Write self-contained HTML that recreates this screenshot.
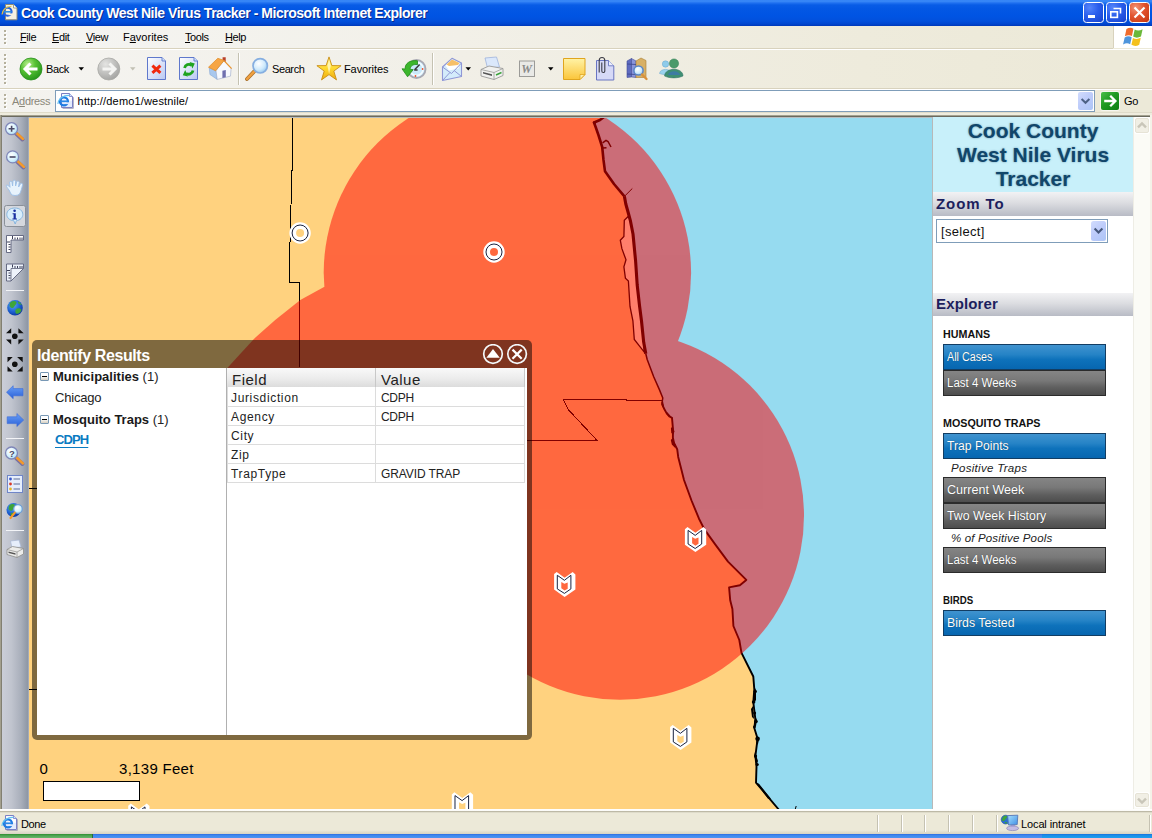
<!DOCTYPE html>
<html lang="en">
<head>
<meta charset="utf-8">
<title>Cook County West Nile Virus Tracker - Microsoft Internet Explorer</title>
<style>
html,body{margin:0;padding:0;}
body{width:1152px;height:838px;overflow:hidden;background:#ece9d8;font-family:"Liberation Sans",sans-serif;}
#win{position:relative;width:1152px;height:838px;overflow:hidden;background:#ece9d8;}
.abs{position:absolute;}
/* ---------- title bar ---------- */
#titlebar{left:0;top:0;width:1152px;height:26px;
 background:linear-gradient(to bottom,#2f7ff5 0px,#3d8cf8 1px,#1f70f0 3px,#085ce6 5px,#0357e4 9px,#0054e3 16px,#0250dc 21px,#0146cf 24px,#0038b8 26px);}
#titletext{left:21px;top:5px;color:#fff;font-weight:bold;font-size:14px;line-height:16px;white-space:nowrap;letter-spacing:-0.48px;
 text-shadow:1px 1px 0 #0a2a8c;}
.wbtn{top:2px;width:19px;height:19px;border:1px solid #fff;border-radius:3.5px;
 background:radial-gradient(circle at 30% 25%,#5585fa 0%,#2a5eec 45%,#1742cc 100%);}
#wclose{background:radial-gradient(circle at 30% 25%,#f29478 0%,#e2532e 45%,#c4360f 100%);}
/* ---------- menu bar ---------- */
#menubar{left:0;top:26px;width:1152px;height:22px;background:linear-gradient(to right,#f5f5f3 0%,#f2f0e8 40%,#eeebdc 75%,#ece9d8 95%);}
.menu{top:31px;font-size:11px;line-height:13px;color:#000;white-space:nowrap;letter-spacing:-0.4px;}
.menu u{text-decoration:underline;}
.grip{width:3px;}
.grip i{display:block;width:2px;height:2px;background:#b5b09c;margin-bottom:2px;box-shadow:1px 1px 0 #fff;}
/* ---------- toolbar ---------- */
#toolbar{left:0;top:50px;width:1152px;height:39px;background:linear-gradient(to right,#f5f4f1 0%,#f1efe7 40%,#eeebdc 75%,#ece9d8 95%);}
.tbtxt{font-size:11px;line-height:13px;color:#000;white-space:nowrap;letter-spacing:-0.4px;}
.sep{width:1px;background:#c5c2b2;box-shadow:1px 0 0 #fff;}
/* ---------- address bar ---------- */
#addrbar{left:0;top:90px;width:1152px;height:23px;background:linear-gradient(to right,#f4f3ef 0%,#f0eee5 40%,#eeebdc 75%,#ece9d8 95%);}
#addrbox{left:55px;top:90px;width:1038px;height:20px;border:1px solid #7f9db9;background:#fff;}
/* ---------- status bar ---------- */
#statusbar{left:0;top:811px;width:1152px;height:23px;background:#ece9d8;}
</style>
</head>
<body>
<div id="win">
<!-- TITLE BAR -->
<div id="titlebar" class="abs"></div>
<div id="titletext" class="abs">Cook County West Nile Virus Tracker - Microsoft Internet Explorer</div>
<div id="wmin" class="abs wbtn" style="left:1083px"></div>
<div id="wmax" class="abs wbtn" style="left:1106px"></div>
<div id="wclose" class="abs wbtn" style="left:1129px"></div>

<!-- MENU BAR -->
<div id="menubar" class="abs"></div>
<div class="abs menu" style="left:20px"><u>F</u>ile</div>
<div class="abs menu" style="left:52px"><u>E</u>dit</div>
<div class="abs menu" style="left:86px"><u>V</u>iew</div>
<div class="abs menu" style="left:123px;letter-spacing:0">F<u>a</u>vorites</div>
<div class="abs menu" style="left:185px"><u>T</u>ools</div>
<div class="abs menu" style="left:225px"><u>H</u>elp</div>

<!-- TOOLBAR -->
<div id="toolbar" class="abs"></div>

<!-- ADDRESS BAR -->
<div id="addrbar" class="abs"></div>
<div id="addrbox" class="abs"></div>

<!-- toolbar grips -->
<div class="abs grip" style="left:4px;top:30px"><i></i><i></i><i></i><i></i></div>
<div class="abs grip" style="left:4px;top:54px"><i></i><i></i><i></i><i></i><i></i><i></i><i></i><i></i></div>
<div class="abs grip" style="left:4px;top:94px"><i></i><i></i><i></i><i></i></div>
<!-- separators between bars -->
<div class="abs" style="left:0;top:48px;width:1113px;height:1px;background:#d8d2bd"></div>
<div class="abs" style="left:0;top:49px;width:1152px;height:1px;background:#fff"></div>
<div class="abs" style="left:0;top:88px;width:1152px;height:1px;background:#d8d2bd"></div>
<div class="abs" style="left:0;top:89px;width:1152px;height:1px;background:#fff"></div>
<!-- windows flag box -->
<div class="abs" style="left:1113px;top:26px;width:39px;height:22px;background:#fff;border-left:1px solid #d8d2bd;box-sizing:border-box"></div>
<svg class="abs" style="left:1120px;top:26px" width="28" height="23.3" viewBox="0 0 24 20">
 <path d="M5.5,2.5 C8,1.2 9.8,1.2 11.5,2.4 L10.2,8.6 C8.4,7.5 6.4,7.6 4.2,8.8 Z" fill="#ef6b2c"/>
 <path d="M12.6,3 C14.6,4.2 16.8,4.2 19.4,2.8 L18,9 C15.6,10.3 13.4,10.3 11.3,9.1 Z" fill="#6bb83a"/>
 <path d="M4,9.8 C6.2,8.6 8.2,8.6 10,9.7 L8.7,15.6 C6.8,14.5 4.8,14.6 2.6,15.8 Z" fill="#4e95dc"/>
 <path d="M11.1,10.2 C13.2,11.4 15.4,11.4 17.8,10.1 L16.5,16 C14.2,17.4 12,17.4 9.8,16.1 Z" fill="#f4c11d"/>
</svg>
<!-- TOOLBAR ICONS -->
<svg class="abs" style="left:0;top:50px" width="700" height="38" viewBox="0 50 700 38">
 <defs>
  <radialGradient id="gGreen" cx="35%" cy="28%" r="75%"><stop offset="0" stop-color="#b8ee8e"/><stop offset="0.45" stop-color="#58c234"/><stop offset="1" stop-color="#27971c"/></radialGradient>
  <radialGradient id="gGray" cx="35%" cy="28%" r="75%"><stop offset="0" stop-color="#e4e4e2"/><stop offset="0.5" stop-color="#c4c4c2"/><stop offset="1" stop-color="#a5a5a3"/></radialGradient>
  <linearGradient id="gPage" x1="0" y1="0" x2="1" y2="1"><stop offset="0" stop-color="#ffffff"/><stop offset="1" stop-color="#b9c8f2"/></linearGradient>
  <radialGradient id="gLens" cx="40%" cy="35%" r="70%"><stop offset="0" stop-color="#ffffff"/><stop offset="0.6" stop-color="#cfeafc"/><stop offset="1" stop-color="#8fc4ee"/></radialGradient>
  <linearGradient id="gStar" x1="0" y1="0" x2="0" y2="1"><stop offset="0" stop-color="#fff38a"/><stop offset="0.5" stop-color="#ffd92e"/><stop offset="1" stop-color="#eeaa10"/></linearGradient>
  <linearGradient id="gNote" x1="0" y1="0" x2="0" y2="1"><stop offset="0" stop-color="#fff3a6"/><stop offset="1" stop-color="#fbc53a"/></linearGradient>
 </defs>
 <!-- back -->
 <circle cx="31" cy="69" r="11" fill="url(#gGreen)" stroke="#2a8f1e" stroke-width="0.8"/>
 <path d="M25,69 L37.5,69 M30.5,63.5 L25,69 L30.5,74.5" fill="none" stroke="#fff" stroke-width="3" stroke-linejoin="miter"/>
 <path d="M78.5,67.3 L84.0,67.3 L81.25,70.6 Z" fill="#000"/>
 <!-- forward -->
 <circle cx="108.8" cy="69" r="11" fill="url(#gGray)" stroke="#a9a9a6" stroke-width="0.8"/>
 <path d="M102.5,69 L115,69 M109.5,63.5 L115,69 L109.5,74.5" fill="none" stroke="#f4f4f2" stroke-width="3"/>
 <path d="M130.0,67.3 L135.5,67.3 L132.75,70.6 Z" fill="#c2c0b4"/>
 <!-- stop -->
 <path d="M147.5,57.5 L162,57.5 L165.5,61 L165.5,79.5 L147.5,79.5 Z" fill="url(#gPage)" stroke="#5f78cc" stroke-width="1"/>
 <path d="M162,57.5 L162,61 L165.5,61" fill="#cfe0fb" stroke="#5f78cc" stroke-width="0.9"/>
 <path d="M152.4,65.6 L160.4,72.8 M160.4,65.6 L152.4,72.8" stroke="#f0280e" stroke-width="3" fill="none"/>
 <!-- refresh -->
 <path d="M179.5,57.5 L194,57.5 L197.5,61 L197.5,79.5 L179.5,79.5 Z" fill="url(#gPage)" stroke="#5f78cc" stroke-width="1"/>
 <path d="M194,57.5 L194,61 L197.5,61" fill="#cfe0fb" stroke="#5f78cc" stroke-width="0.9"/>
 <path d="M184.6,68 A4.3,4.3 0 0 1 191.6,65.4 M193,70.6 A4.3,4.3 0 0 1 186,73.2" fill="none" stroke="#1fa31f" stroke-width="2.8"/>
 <path d="M189.6,62 L194.8,63.4 L192.4,68.6 Z M188,76.6 L182.8,75.2 L185.2,70 Z" fill="#1fa31f"/>
 <!-- home -->
 <path d="M222.6,57.3 L225.7,57.3 L225.7,62 L222.6,61 Z" fill="#b8402a"/>
 <path d="M209.3,68 L216,70.7 L217.2,79.4 L209.9,74.5 Z" fill="#a9c8ee" stroke="#7fa0d0" stroke-width="0.5"/>
 <path d="M223.8,60.7 L231.1,68.2 L230.5,76.1 L217.2,79.4 L216,70.7 Z" fill="#f7f9fd" stroke="#9aa8c8" stroke-width="0.6"/>
 <path d="M222.4,70.8 L225.8,70 L225.8,77.3 L222.4,78.1 Z" fill="#6f6fae"/>
 <path d="M208.5,67.2 L217.8,58.3 L224.2,60.4 L215.6,70.8 Z" fill="#f6a544" stroke="#e08a24" stroke-width="0.7" stroke-linejoin="round"/>
 <path d="M224,60.6 L231.6,68.6" stroke="#e9942e" stroke-width="1.3" fill="none"/>
 <!-- separator -->
 <path d="M238.5,53 L238.5,85" stroke="#c5c2b2" stroke-width="1"/><path d="M239.5,53 L239.5,85" stroke="#fff" stroke-width="1"/>
 <!-- search -->
 <path d="M254,71.6 L247,79" stroke="#a8702c" stroke-width="3.8" stroke-linecap="round"/>
 <path d="M254,71.6 L247,79" stroke="#f0a040" stroke-width="2.4" stroke-linecap="round"/>
 <circle cx="260.2" cy="65.8" r="7.2" fill="url(#gLens)" stroke="#86aee0" stroke-width="1.7"/>
 <!-- favorites star -->
 <path d="M329.0,56.9 L331.9,65.6 L341.1,65.7 L333.8,71.1 L336.5,79.9 L329.0,74.6 L321.5,79.9 L324.2,71.1 L316.9,65.7 L326.1,65.6 Z" fill="url(#gStar)" stroke="#c98d14" stroke-width="0.9" stroke-linejoin="round"/>
 <path d="M329.1,60 L330.8,65.6 L329.1,74 L327.4,65.6 Z" fill="#fffbd0" opacity="0.75"/>
 <!-- history -->
 <circle cx="416.5" cy="69" r="9" fill="#c9e9fa" stroke="#a9a9b3" stroke-width="1.9"/>
 <circle cx="416.5" cy="69" r="6.6" fill="none" stroke="#f4fbff" stroke-width="1.6"/>
 <path d="M414.6,69.8 L419.6,64.6 M414.2,70 L417.6,70" stroke="#3c3c3c" stroke-width="1.5" fill="none"/>
 <circle cx="422.6" cy="69" r="0.9" fill="#f0502a"/><circle cx="415.5" cy="76" r="0.9" fill="#f0502a"/>
 <path d="M417.5,60.8 C410,59.6 404.6,63.6 405.2,69 L402,68.8 L407.6,76.8 L413.2,69.6 L410.2,69.4 C410.2,66 412.8,64 417.5,64.6 Z" fill="#3cb62c" stroke="#1f8a18" stroke-width="0.8" stroke-linejoin="round"/>
 <!-- separator -->
 <path d="M432.5,53 L432.5,85" stroke="#c5c2b2" stroke-width="1"/><path d="M433.5,53 L433.5,85" stroke="#fff" stroke-width="1"/>
 <!-- mail -->
 <path d="M442.5,67 L452,58.3 L461.5,63 L461.5,76.5 L442.5,80.5 Z" fill="#d4ecfb" stroke="#8f97d6" stroke-width="1.1" stroke-linejoin="round"/>
 <path d="M445.5,65.5 L452,59.6 L459.5,63 L458.5,68.5 L449,70.5 Z" fill="#fff"/>
 <path d="M446.5,64.5 L452,59.6 L459.5,63 L458,65 L449,66 Z" fill="#f6c06a"/>
 <path d="M442.5,67 L451.5,73.5 L461.5,63 M442.5,80.5 L450,72.4 M461.5,76.5 L454.2,70.6" fill="none" stroke="#8f97d6" stroke-width="1"/>
 <path d="M465.5,67.3 L471.0,67.3 L468.25,70.6 Z" fill="#000"/>
 <!-- print -->
 <path d="M485,58 L496.5,57 L499.5,67 L487.5,68 Z" fill="#dbe8fb" stroke="#9fb4dc" stroke-width="0.8"/>
 <path d="M481,69.5 L489,66 L503,68.5 L503,75.5 L494,79.5 L481,76 Z" fill="#f1f1ef" stroke="#9a9a98" stroke-width="0.9"/>
 <path d="M481,69.5 L494,72.5 L503,68.5 M494,72.5 L494,79.5" fill="none" stroke="#9a9a98" stroke-width="0.8"/>
 <path d="M483,72 L492,74.3 L492,76 L483,73.6 Z" fill="#555"/>
 <path d="M496,75 L501.5,72.5" stroke="#39a33a" stroke-width="1.4"/>
 <!-- word -->
 <rect x="519.5" y="61" width="15" height="15.5" fill="#e9e9e6" stroke="#9b9b98" stroke-width="1"/>
 <text x="521.3" y="73.3" font-family="Liberation Serif, serif" font-size="12" font-weight="bold" font-style="italic" fill="#8a8a88">W</text>
 <path d="M548.0,67.3 L553.5,67.3 L550.75,70.6 Z" fill="#000"/>
 <!-- note -->
 <path d="M563.5,58.5 L585,58.5 L585,74.5 L580,79.5 L563.5,79.5 Z" fill="url(#gNote)" stroke="#e0a51e" stroke-width="1"/>
 <path d="M585,74.5 L580,74.5 L580,79.5 Z" fill="#fff0a8" stroke="#e0a51e" stroke-width="0.8"/>
 <!-- clip page -->
 <path d="M596.5,60.5 L608.5,60.5 L613.8,65.8 L613.8,80 L596.5,80 Z" fill="#d6d9f7" stroke="#6a76c2" stroke-width="1"/>
 <path d="M608.5,60.5 L608.5,65.8 L613.8,65.8" fill="#eceffc" stroke="#6a76c2" stroke-width="0.9"/>
 <path d="M599.2,72.5 L599.2,60.5 A2.8,3 0 0 1 604.8,60.5 L604.8,71 A1.5,1.5 0 0 1 601.8,71 L601.8,62.5" fill="none" stroke="#3c3c46" stroke-width="1.1"/>
 <!-- research -->
 <path d="M627,61 L631.5,58.5 L631.5,77 L627,77.5 Z" fill="#5f6cc0" stroke="#434e98" stroke-width="0.6"/>
 <path d="M631.5,58.5 L636,61 L636,77.5 L631.5,77 Z" fill="#8a95dc" stroke="#434e98" stroke-width="0.6"/>
 <path d="M636,61 L641,58 L646,60.5 L646,77.5 L636,77.5 Z" fill="#d8b065" stroke="#a87e32" stroke-width="0.6"/>
 <path d="M627,74 L636,74.5 M627,64 L636,64.5" stroke="#39438a" stroke-width="0.8"/>
 <circle cx="638.5" cy="70.5" r="4.6" fill="url(#gLens)" stroke="#5a86c8" stroke-width="1.5"/>
 <path d="M642,74.5 L646.5,79" stroke="#d9913c" stroke-width="2.4" stroke-linecap="round"/>
 <!-- messenger -->
 <circle cx="665.5" cy="64" r="3.2" fill="#8ecbea" stroke="#6aa6cf" stroke-width="0.5"/>
 <path d="M659.5,73.5 C660,68 671,68 671.5,73.5 C668,75 663,75 659.5,73.5 Z" fill="#9ad3ee" stroke="#6aa6cf" stroke-width="0.5"/>
 <circle cx="674" cy="63.5" r="4.6" fill="#4a9a6a" stroke="#2f7a52" stroke-width="0.5"/>
 <path d="M664.5,76 C665,67 683,67 683,76 C678,78.5 669.5,78.5 664.5,76 Z" fill="#3f8f73" stroke="#2a6f5f" stroke-width="0.5"/>
 <path d="M668,75 C669,70 679,70 680,75 Z" fill="#3d74b8" opacity="0.7"/>
</svg>
<div class="abs tbtxt" style="left:46px;top:63px">Back</div>
<div class="abs tbtxt" style="left:272px;top:63px">Search</div>
<div class="abs tbtxt" style="left:344px;top:63px;letter-spacing:-0.1px">Favorites</div>
<!-- address bar contents -->
<div class="abs tbtxt" style="left:12px;top:95px;color:#8a877a;letter-spacing:-0.3px">A<u>d</u>dress</div>
<svg class="abs" style="left:57px;top:92px" width="18" height="18" viewBox="0 0 18 18">
 <path d="M5.6,16.4 L16.4,16.4 L16.4,5.2" fill="none" stroke="#8d8aa6" stroke-width="1" opacity="0.7"/>
 <path d="M4.5,1.5 L12.5,1.5 L15.5,4.5 L15.5,15.5 L4.5,15.5 Z" fill="#e4ecfd" stroke="#7a80c4" stroke-width="1"/>
 <path d="M5.2,2.2 L12,2.2 L12,5 L14.8,5 L14.8,9 L5.2,7 Z" fill="#fdfdff"/>
 <path d="M12.5,1.5 L12.5,4.5 L15.5,4.5" fill="#cfe0fb" stroke="#7a80c4" stroke-width="0.8"/>
 <circle cx="6.9" cy="9.3" r="4" fill="none" stroke="#1f7be2" stroke-width="2.3"/>
 <path d="M3.2,9.3 L10.8,9.3" stroke="#2a8ae8" stroke-width="1.7"/>
 <path d="M7.8,10.3 L12.2,10.3 L12.2,12.1 L7.8,12.1 Z" fill="#dde8fc"/>
 <path d="M0.9,12 C1.4,6.5 6.5,3.2 12.2,3.4" fill="none" stroke="#62c2f2" stroke-width="1.1"/>
</svg>
<div class="abs tbtxt" style="left:77.6px;top:95px;letter-spacing:0.17px">http://demo1/westnile/</div>
<div class="abs" style="left:1078px;top:92px;width:15px;height:18px;border-radius:2px;background:linear-gradient(135deg,#d2dcfd 0%,#bccbfa 50%,#adc5f6 100%)"></div>
<svg class="abs" style="left:1078px;top:92px" width="15" height="18" viewBox="0 0 15 18"><path d="M3.6,7 L7.5,10.8 L11.4,7" fill="none" stroke="#4d6185" stroke-width="2"/></svg>
<div class="abs" style="left:1101px;top:92px;width:18px;height:18px;border-radius:2px;background:linear-gradient(135deg,#4cc04a 0%,#1f9a22 45%,#0e7d14 100%);box-shadow:0 0 0 1px #f6f6ef"></div>
<svg class="abs" style="left:1101px;top:92px" width="18" height="18" viewBox="0 0 18 18"><path d="M3.2,9 L14,9 M9.2,3.8 L14.4,9 L9.2,14.2" fill="none" stroke="#fff" stroke-width="2.3"/></svg>
<div class="abs tbtxt" style="left:1124px;top:95px">Go</div>
<!-- title bar icon -->
<svg class="abs" style="left:1px;top:3px" width="20" height="20" viewBox="0 0 20 20">
 <path d="M4.5,1.5 L12.5,1.5 L16,5 L16,16.8 L4.5,16.8 Z" fill="#f4f1e2" stroke="#8d8a78" stroke-width="1"/>
 <path d="M12.5,1.5 L12.5,5 L16,5" fill="#fff" stroke="#8d8a78" stroke-width="0.8"/>
 <circle cx="6.6" cy="8.8" r="4" fill="none" stroke="#2462e0" stroke-width="2.1"/>
 <path d="M2.8,8.8 L10.6,8.8" stroke="#2a8fe6" stroke-width="1.6"/>
 <path d="M7.4,10.4 L12,10.4 L12,12.2 L7.4,12.2 Z" fill="#f4f1e2"/>
 <path d="M1,11.5 C1.5,7 5,3.5 10.5,3.2" fill="none" stroke="#e8c43a" stroke-width="1.1"/>
</svg>
<!-- window button glyphs -->
<svg class="abs" style="left:1083px;top:2px" width="67" height="21" viewBox="0 0 67 21">
 <rect x="5" y="13" width="7" height="3" fill="#fff"/>
 <path d="M30.5,6.5 L37.5,6.5 L37.5,11.5" fill="none" stroke="#fff" stroke-width="1.6"/>
 <rect x="27.8" y="9.8" width="6.6" height="5.6" fill="none" stroke="#fff" stroke-width="1.6"/>
 <path d="M51.5,5.5 L61.5,15.5 M61.5,5.5 L51.5,15.5" fill="none" stroke="#fff" stroke-width="2.2"/>
</svg>
<!-- CONTENT -->
<!-- content frame -->
<div class="abs" style="left:0;top:112px;width:1152px;height:1px;background:#dfdbc9"></div>
<div class="abs" style="left:0;top:113px;width:1152px;height:2px;background:#efecde"></div>
<div class="abs" style="left:0;top:115px;width:1152px;height:1px;background:#a3a190"></div>
<div class="abs" style="left:0;top:116px;width:1152px;height:1px;background:#6b6a5e"></div>
<div class="abs" style="left:0;top:115px;width:2px;height:694px;background:linear-gradient(to right,#b4b09c,#716f64)"></div>
<div class="abs" style="left:1150px;top:115px;width:2px;height:694px;background:#f4f2e8"></div>
<div class="abs" style="left:0;top:809px;width:1152px;height:2px;background:linear-gradient(to bottom,#fff,#fbfaf6)"></div>
<!-- LEFT MAP TOOLBAR -->
<div id="ltool" class="abs" style="left:2px;top:117px;width:27px;height:692px;background:linear-gradient(to right,#cbced8 0%,#c0c4ce 35%,#a9afbb 70%,#8d96a4 96%,#b9bec8 100%);"></div>
<svg class="abs" style="left:2px;top:117px" width="27" height="460" viewBox="2 117 27 460">
 <defs>
  <radialGradient id="lLens" cx="40%" cy="35%" r="70%"><stop offset="0" stop-color="#ffffff"/><stop offset="0.6" stop-color="#d6f1fc"/><stop offset="1" stop-color="#a6d8f2"/></radialGradient>
  <radialGradient id="lGlobe" cx="38%" cy="32%" r="75%"><stop offset="0" stop-color="#5aa8f0"/><stop offset="0.6" stop-color="#1c5fd0"/><stop offset="1" stop-color="#0a2f9a"/></radialGradient>
  <linearGradient id="lArr" x1="0" y1="0" x2="0" y2="1"><stop offset="0" stop-color="#6aa0f6"/><stop offset="1" stop-color="#2a60d8"/></linearGradient>
 </defs>
 <!-- zoom in -->
 <path d="M16,133.5 L22.5,139.5" stroke="#7a6fa0" stroke-width="4" stroke-linecap="round"/>
 <path d="M16.5,133 L23,139" stroke="#f39a2c" stroke-width="2.4" stroke-linecap="round"/>
 <circle cx="11.6" cy="128.7" r="6" fill="url(#lLens)" stroke="#7f86b8" stroke-width="1.3"/>
 <path d="M8.6,128.8 L14.6,128.8 M11.6,125.8 L11.6,131.8" stroke="#4a4a66" stroke-width="1.6"/>
 <!-- zoom out -->
 <path d="M17,161.5 L23.5,167.5" stroke="#7a6fa0" stroke-width="4" stroke-linecap="round"/>
 <path d="M17.5,161 L24,167" stroke="#f39a2c" stroke-width="2.4" stroke-linecap="round"/>
 <circle cx="12.6" cy="156.9" r="6" fill="url(#lLens)" stroke="#7f86b8" stroke-width="1.3"/>
 <path d="M9.6,157 L15.6,157" stroke="#4a4a66" stroke-width="1.6"/>
 <!-- hand -->
 <path d="M9,190 C7.5,188 6.2,186.5 6.3,185.3 C7.3,184.6 8.8,185.8 10,187.3 L9.6,182 C10.3,180.8 11.6,181 12,182.2 L12.6,186 L13,180.8 C13.8,179.8 15.2,180 15.5,181.2 L15.6,186 L16.8,181.6 C17.8,180.8 19,181.2 19.2,182.4 L18.6,187 L20.6,183.6 C21.6,183 22.6,183.6 22.6,184.8 C21.8,188 21,191.5 19.6,194 C17.5,196 12.5,196 11,194 Z" fill="#e8f3fc" stroke="#9cc0e8" stroke-width="0.9"/>
 <!-- info (selected) -->
 <rect x="4.5" y="205.5" width="21" height="21" rx="2" fill="#d5d8de" stroke="#8a9099" stroke-width="1"/>
 <path d="M14.8,208 C19.6,208 22.8,210.8 22.8,214.4 C22.8,217.6 20.2,220.2 16.4,220.7 L15.2,224 L13.8,220.7 C9.6,220.4 6.8,217.8 6.8,214.4 C6.8,210.8 10,208 14.8,208 Z" fill="#d8eefc" stroke="#7fb0dc" stroke-width="0.9"/>
 <circle cx="14.6" cy="210.8" r="1.3" fill="#1a2fa0"/>
 <path d="M12.6,213.2 L15.8,213.2 L15.8,218.4 L17,218.4 L17,219.4 L12.4,219.4 L12.4,218.4 L13.6,218.4 L13.6,214.2 L12.6,214.2 Z" fill="#1a2fa0"/>
 <!-- measure 1 -->
 <path d="M6.5,235.5 L23.5,235.5 L23.5,240 L11,240 L11,252.5 L6.5,252.5 Z" fill="#fff" stroke="#5a5f78" stroke-width="0.9"/>
 <path d="M12.5,236 L12.5,239 M15,237.5 L15,239.5 M17.5,237.5 L17.5,239.5 M20,237.5 L20,239.5 M22,237.5 L22,239.5 M7,242 L10,242 M8.5,244.5 L10.5,244.5 M8.5,247 L10.5,247 M8.5,249.5 L10.5,249.5" stroke="#3a3f58" stroke-width="1"/>
 <!-- measure 2 -->
 <path d="M6.5,264 L23.5,264 L23.5,268.5 L11,281 L6.5,281 Z" fill="#eef3fb" stroke="#5a5f78" stroke-width="0.9"/>
 <path d="M11,268.5 L23.5,268.5 M11,268.5 L11,281" stroke="#5a5f78" stroke-width="0.8"/>
 <path d="M12.5,264.5 L12.5,267.5 M15,266 L15,268 M17.5,266 L17.5,268 M20,266 L20,268 M22,266 L22,268 M7,270.5 L10,270.5 M8.5,273 L10.5,273 M8.5,275.5 L10.5,275.5 M8.5,278 L10.5,278" stroke="#3a3f58" stroke-width="1"/>
 <!-- separator -->
 <path d="M6,290.5 L24,290.5" stroke="#f3f4f7" stroke-width="1"/>
 <!-- globe -->
 <circle cx="15" cy="307.8" r="7.8" fill="url(#lGlobe)"/>
 <path d="M10,303 C12,300.5 15,300.5 16.5,302 C17,304 15,305 14,307 C13,309 11,308 9.5,306 Z M16,309 C18,307.5 20.5,308 21.5,310 C20.5,313 18,314.5 16,313.5 C15,312 15,310.5 16,309 Z M18,301.5 C19.5,302 21,303.5 21.8,305 C20.5,305 19,304 18,303 Z" fill="#3fa53a"/>
 <!-- full extent (arrows in) -->
 <circle cx="14.8" cy="336.2" r="2.8" fill="#111"/>
 <path d="M6,333.2 L11.2,328.3 L11.2,333.2 Z M18.4,328.3 L23.7,333.2 L18.4,333.2 Z M6,339.6 L11.2,339.6 L11.2,344.5 Z M18.4,339.6 L23.7,339.6 L18.4,344.5 Z" fill="#111"/>
 <!-- arrows out -->
 <circle cx="14.8" cy="364.2" r="2.8" fill="#111"/>
 <path d="M7.5,357 L12.7,357 L7.5,362.3 Z M17.1,357 L22.7,357 L22.7,362.3 Z M7.5,366.2 L7.5,371.5 L12.7,371.5 Z M22.7,366.2 L22.7,371.5 L17.1,371.5 Z" fill="#111"/>
 <!-- back arrow -->
 <path d="M6.5,392.2 L13.2,385.7 L13.2,388.6 L23,388.6 L23,395.8 L13.2,395.8 L13.2,398.7 Z" fill="url(#lArr)" stroke="#3a6ad8" stroke-width="0.6"/>
 <!-- fwd arrow -->
 <path d="M23.7,420 L16.9,413.5 L16.9,416.8 L7.2,416.8 L7.2,423.6 L16.9,423.6 L16.9,426.6 Z" fill="url(#lArr)" stroke="#3a6ad8" stroke-width="0.6"/>
 <!-- separator -->
 <path d="M6,438.5 L24,438.5" stroke="#f3f4f7" stroke-width="1"/>
 <!-- find (?) -->
 <path d="M16,458 L22.5,464" stroke="#7a6fa0" stroke-width="4" stroke-linecap="round"/>
 <path d="M16.5,457.5 L23,463.5" stroke="#f39a2c" stroke-width="2.4" stroke-linecap="round"/>
 <circle cx="11.5" cy="453" r="6" fill="url(#lLens)" stroke="#7f86b8" stroke-width="1.3"/>
 <text x="8.9" y="456.6" font-family="Liberation Sans, sans-serif" font-size="9.5" font-weight="bold" fill="#4a4a66">?</text>
 <!-- legend -->
 <rect x="7.5" y="475.5" width="15" height="17" fill="#e6eefc" stroke="#6f86c8" stroke-width="1"/>
 <circle cx="10.5" cy="479" r="1.4" fill="#3a58c8"/><circle cx="10.5" cy="484" r="1.4" fill="#d83a2a"/><circle cx="10.5" cy="489" r="1.4" fill="#e8b82a"/>
 <path d="M13.5,479 L20,479 M13.5,484 L20,484 M13.5,489 L20,489" stroke="#8a98b8" stroke-width="1.6"/>
 <!-- globe + magnifier -->
 <circle cx="13.5" cy="510" r="7" fill="url(#lGlobe)"/>
 <path d="M9,506 C11,503.5 13.5,503.5 15,505 C15.5,507 13.5,508 12.5,510 C11.5,511.5 10,511 8.5,509 Z M11,513 C12.5,512.5 14,513.5 14,515 C13,516.5 11.5,516 10.5,515 Z" fill="#3fa53a"/>
 <circle cx="18" cy="509" r="4.3" fill="url(#lLens)" stroke="#6fa0d8" stroke-width="1.2"/>
 <path d="M14.8,512.6 L10.5,518" stroke="#f39a2c" stroke-width="2.2" stroke-linecap="round"/>
 <!-- separator -->
 <path d="M6,530.5 L24,530.5" stroke="#f3f4f7" stroke-width="1"/>
 <!-- printer -->
 <path d="M10.5,541 L19,540 L21,547 L12,548 Z" fill="#e6eefb" stroke="#a9b8d4" stroke-width="0.7"/>
 <path d="M7,549.5 L12.5,546.5 L23.5,548.5 L23.5,554 L17,557.5 L7,554.5 Z" fill="#ececea" stroke="#8e8e8c" stroke-width="0.8"/>
 <path d="M7,549.5 L17,552 L23.5,548.5 M17,552 L17,557.5" fill="none" stroke="#8e8e8c" stroke-width="0.7"/>
 <path d="M8.5,551.5 L15.5,553.3 L15.5,554.8 L8.5,553 Z" fill="#555"/>
</svg>
<svg class="abs" id="map" style="left:29px;top:117px" width="903" height="692" viewBox="29 117 903 692">
<rect x="29" y="117" width="903" height="692" fill="#ffd27f"/>
<path d="M604.0,117.0 L600.0,120.0 L594.0,122.5 L596.0,128.0 L598.6,135.5 L602.2,147.0 L603.5,160.0 L605.0,171.3 L614.0,184.0 L624.4,196.4 L625.8,204.0 L628.3,213.0 L630.3,220.3 L633.0,234.0 L635.6,261.0 L637.2,285.0 L639.5,305.5 L641.5,321.0 L643.7,342.3 L645.8,353.8 L647.2,359.5 L653.7,376.7 L659.4,389.6 L662.8,398.0 L661.9,403.4 L664.0,408.5 L666.7,413.4 L669.5,416.5 L672.0,417.8 L672.9,428.2 L672.9,437.8 L674.0,443.0 L677.2,449.2 L678.2,456.9 L681.5,470.0 L684.0,480.0 L691.5,500.5 L699.0,518.7 L704.4,529.4 L715.2,544.4 L728.0,561.6 L746.3,579.9 L739.9,585.2 L729.1,587.4 L730.2,600.3 L732.4,608.9 L733.4,626.0 L739.3,640.0 L741.5,652.9 L753.3,676.5 L754.3,689.4 L753.3,702.2 L755.4,719.4 L754.3,728.0 L757.6,738.7 L755.4,755.9 L756.5,766.6 L756.0,782.7 L777.9,808.5 L779.0,810.0 L933,810 L933,117 Z" fill="#96dbf0"/>
<path d="M628.4,216.2 L624.3,220.3 L623.9,236.5 L620.3,240.2 L621.9,248.7 L626.0,259.8 L623.9,266.9 L625.4,278.1 L628.4,281.1 L630.0,306.5 L632.9,320.8 L634.3,339.4 L644.4,352.3 L643.7,342.3 L641.5,321.0 L639.5,305.5 L637.2,285.0 L635.6,261.0 L633.0,234.0 L630.3,220.3 Z" fill="#ffffd8" stroke="#000" stroke-width="1.3"/>
<path d="M292.5,117 L292.5,170 L291.5,171 L290.5,240 L289.5,244 L289.5,282.5 L299.5,282.5 L299.5,367" fill="none" stroke="#000" stroke-width="1" shape-rendering="crispEdges"/>
<path d="M661.7,400.5 L627,400.5 L626.3,399.5 L563.3,399.5 L568.6,409.9 L597.1,440.5 L520,440.5" fill="none" stroke="#000" stroke-width="1" shape-rendering="crispEdges"/>
<path d="M29,488.5 L40,488.5 M29,689.5 L40,689.5" fill="none" stroke="#000" stroke-width="1" shape-rendering="crispEdges"/>
<path d="M604.0,117.0 L600.0,120.0 L594.0,122.5 L596.0,128.0 L598.6,135.5 L602.2,147.0 L603.5,160.0 L605.0,171.3 L614.0,184.0 L624.4,196.4" fill="none" stroke="#000" stroke-width="2.6" stroke-linejoin="round"/>
<path d="M624.4,196.4 L625.8,204.0 L628.3,213.0 L630.3,220.3 L633.0,234.0 L635.6,261.0 L637.2,285.0 L639.5,305.5 L641.5,321.0 L643.7,342.3 L645.8,353.8" fill="none" stroke="#000" stroke-width="3.1" stroke-linejoin="round"/>
<path d="M645.8,353.8 L647.2,359.5 L653.7,376.7 L659.4,389.6 L662.8,398.0 L661.9,403.4" fill="none" stroke="#000" stroke-width="1.5" stroke-linejoin="round"/>
<path d="M661.9,403.4 L664.0,408.5 L666.7,413.4 L669.5,416.5 L672.0,417.8 L672.9,428.2 L672.9,437.8 L674.0,443.0 L677.2,449.2 L678.2,456.9 L681.5,470.0 L684.0,480.0 L691.5,500.5 L699.0,518.7 L704.4,529.4 L715.2,544.4 L728.0,561.6 L746.3,579.9 L739.9,585.2 L729.1,587.4 L730.2,600.3 L732.4,608.9 L733.4,626.0 L739.3,640.0 L741.5,652.9 L753.3,676.5 L754.3,689.4 L753.3,702.2 L755.4,719.4 L754.3,728.0 L757.6,738.7 L755.4,755.9 L756.5,766.6 L756.0,782.7 L777.9,808.5 L779.0,810.0" fill="none" stroke="#000" stroke-width="1.9" stroke-linejoin="round"/>
<path d="M624.4,196.4 L632.3,188.5 M796.2,806 L795,810" fill="none" stroke="#000" stroke-width="1"/>
<path d="M602.6,142.8 L606,140.3 L608,141.5 L611,147 M602.5,148 L606.5,147.8" fill="none" stroke="#000" stroke-width="1.5"/>
<circle cx="594.6" cy="122.6" r="1.7" fill="#000"/>
<path d="M754,686 l2,4 l0,10 l-2,3 z M753,706 l-2,3 l1,8 l2,2z M755,716 l2,4 l-1,6 l-2,2z M757,736 l2,3 l-1,5 l-2,1z M755,752 l-1,4 l3,8 l1,-3z M756,782.7 l3,1 l12,15 l-3,0 z M672.5,426 l-1.6,2.5 l0.4,4.5 l2,1.5 l1.2,-3 z M672.6,438 l-1.8,2 l1,4.5 l3.4,3.5 l0.4,-3 z M663,401 l-1.8,2 l0.8,3.5 l2.5,3 z M667,412 l-0.5,2 l3.5,3.6 l2.5,0.4 z" fill="#000"/>
<circle cx="755.2" cy="691.5" r="1.7" fill="#000"/><circle cx="753.6" cy="702" r="1.8" fill="#000"/><circle cx="754.6" cy="713" r="1.5" fill="#000"/><circle cx="756" cy="721.5" r="1.8" fill="#000"/><circle cx="754.4" cy="727" r="1.4" fill="#000"/><circle cx="757.6" cy="738.7" r="2.3" fill="#000"/><circle cx="755.6" cy="756" r="1.5" fill="#000"/><circle cx="757.2" cy="764.5" r="1.6" fill="#000"/>
<g opacity="0.5"><circle cx="507.4" cy="273" r="183.7" fill="#ff0000"/><circle cx="620" cy="515.7" r="184" fill="#ff0000"/><path d="M324,287 L300.3,300.1 L275.2,320.1 L253.9,338.9 L228.2,367.1 L215,385 L215,600 L500,600 L500,280 Z" fill="#ff0000"/></g>
<g transform="translate(695.4,540)"><path d="M-10.5,-10.8 L-7.9,-12.9 L0,-7.2 L8.1,-12.9 L10.8,-10.5 L10.8,4.7 L0,12.1 L-10.5,4.7 Z M-3.3,-2.9 L-0.2,-1.2 L3.1,-2.4 L3.1,3.8 L0,5.7 L-3.3,3.3 Z" fill="#fff" fill-rule="evenodd"/><path d="M-7.3,-9.6 L-0.2,-4.6 L6.3,-9.6 L6.3,4 L-0.2,8.5 L-7.3,4 Z" fill="none" stroke="#1a2340" stroke-width="1"/></g>
<g transform="translate(564.6,584.9)"><path d="M-10.5,-10.8 L-7.9,-12.9 L0,-7.2 L8.1,-12.9 L10.8,-10.5 L10.8,4.7 L0,12.1 L-10.5,4.7 Z M-3.3,-2.9 L-0.2,-1.2 L3.1,-2.4 L3.1,3.8 L0,5.7 L-3.3,3.3 Z" fill="#fff" fill-rule="evenodd"/><path d="M-7.3,-9.6 L-0.2,-4.6 L6.3,-9.6 L6.3,4 L-0.2,8.5 L-7.3,4 Z" fill="none" stroke="#1a2340" stroke-width="1"/></g>
<g transform="translate(680.6,737.9)"><path d="M-10.5,-10.8 L-7.9,-12.9 L0,-7.2 L8.1,-12.9 L10.8,-10.5 L10.8,4.7 L0,12.1 L-10.5,4.7 Z M-3.3,-2.9 L-0.2,-1.2 L3.1,-2.4 L3.1,3.8 L0,5.7 L-3.3,3.3 Z" fill="#fff" fill-rule="evenodd"/><path d="M-7.3,-9.6 L-0.2,-4.6 L6.3,-9.6 L6.3,4 L-0.2,8.5 L-7.3,4 Z" fill="none" stroke="#1a2340" stroke-width="1"/></g>
<g transform="translate(138.7,816.5)"><path d="M-10.5,-10.8 L-7.9,-12.9 L0,-7.2 L8.1,-12.9 L10.8,-10.5 L10.8,4.7 L0,12.1 L-10.5,4.7 Z M-3.3,-2.9 L-0.2,-1.2 L3.1,-2.4 L3.1,3.8 L0,5.7 L-3.3,3.3 Z" fill="#fff" fill-rule="evenodd"/><path d="M-7.3,-9.6 L-0.2,-4.6 L6.3,-9.6 L6.3,4 L-0.2,8.5 L-7.3,4 Z" fill="none" stroke="#1a2340" stroke-width="1"/></g>
<g transform="translate(462.3,805.2)"><path d="M-10.5,-10.8 L-7.9,-12.9 L0,-7.2 L8.1,-12.9 L10.8,-10.5 L10.8,4.7 L0,12.1 L-10.5,4.7 Z M-3.3,-2.9 L-0.2,-1.2 L3.1,-2.4 L3.1,3.8 L0,5.7 L-3.3,3.3 Z" fill="#fff" fill-rule="evenodd"/><path d="M-7.3,-9.6 L-0.2,-4.6 L6.3,-9.6 L6.3,4 L-0.2,8.5 L-7.3,4 Z" fill="none" stroke="#1a2340" stroke-width="1"/></g>
<g transform="translate(300.1,233)"><path d="M-10.7,0 A10.7,10.7 0 1 0 10.7,0 A10.7,10.7 0 1 0 -10.7,0 Z M-4,0 A4,4 0 1 1 4,0 A4,4 0 1 1 -4,0 Z" fill="#fff" fill-rule="evenodd"/><circle r="8" fill="none" stroke="#1a2340" stroke-width="1"/></g>
<g transform="translate(494,252)"><path d="M-10.7,0 A10.7,10.7 0 1 0 10.7,0 A10.7,10.7 0 1 0 -10.7,0 Z M-4,0 A4,4 0 1 1 4,0 A4,4 0 1 1 -4,0 Z" fill="#fff" fill-rule="evenodd"/><circle r="8" fill="none" stroke="#1a2340" stroke-width="1"/></g>
<rect x="43.5" y="781.5" width="96" height="19" fill="#fff" stroke="#000" stroke-width="1"/>
<text x="39.6" y="774" font-family="Liberation Sans, sans-serif" font-size="15" fill="#000">0</text>
<text x="119" y="774" font-family="Liberation Sans, sans-serif" font-size="15" letter-spacing="0.3" fill="#000">3,139 Feet</text>
</svg>
<div class="abs" style="left:29px;top:117px;width:903px;height:1px;background:#b7bec0"></div>
<!-- IDENTIFY RESULTS PANEL -->
<style>
#idpanel{left:32px;top:340px;width:500px;height:400px;background:rgba(0,0,0,0.5);border-radius:5px;}
#idtitle{left:37px;top:346px;color:#fff;font-weight:bold;font-size:16px;line-height:20px;white-space:nowrap;letter-spacing:-0.4px;}
#idbody{left:37px;top:368px;width:490px;height:367px;background:#fff;}
.tree{font-size:13px;line-height:16px;color:#222;white-space:nowrap;}
.tree b{font-weight:bold;color:#1a1a1a}
.mbox{width:7px;height:7px;border:1px solid #7898b5;border-radius:1px;background:linear-gradient(to bottom,#fff 40%,#d6cfc0);}
.mbox i{position:absolute;left:1px;top:3px;width:5px;height:1px;background:#000;}
#grid{left:227px;top:368px;width:298px;}
.gh{position:absolute;top:0;height:19px;background:linear-gradient(to bottom,#f9f9f9 0%,#ececec 55%,#dcdcdc 100%);font-size:15px;line-height:23px;color:#222;letter-spacing:0.5px;overflow:hidden;}
.gr{position:absolute;left:0;width:297px;height:18px;border-bottom:1px solid #dcdcdc;font-size:12px;line-height:20px;color:#222;letter-spacing:0.65px;}
.gr span{position:absolute;top:0;white-space:nowrap;}
</style>
<div id="idpanel" class="abs"></div>
<div id="idtitle" class="abs">Identify Results</div>
<svg class="abs" style="left:481px;top:344px" width="48" height="22" viewBox="0 0 48 22">
 <circle cx="12" cy="10" r="9.3" fill="none" stroke="#f4f8fa" stroke-width="1.7"/>
 <path d="M5.4,13.7 L12,5.1 L18.8,13.7 Z" fill="#fff"/>
 <circle cx="36.1" cy="10" r="9.3" fill="none" stroke="#f4f8fa" stroke-width="1.7"/>
 <path d="M31.5,5.6 L40.7,14.8 M40.7,5.6 L31.5,14.8" stroke="#fff" stroke-width="2.2" fill="none"/>
</svg>
<div id="idbody" class="abs"></div>
<div class="abs" style="left:226px;top:368px;width:1px;height:367px;background:#b0b0b0"></div>
<div class="abs mbox" style="left:40px;top:372px"><i></i></div>
<div class="abs tree" style="left:53px;top:369px"><b>Municipalities</b> (1)</div>
<div class="abs tree" style="left:55px;top:390px;letter-spacing:-0.2px">Chicago</div>
<div class="abs mbox" style="left:40px;top:415px"><i></i></div>
<div class="abs tree" style="left:53px;top:412px"><b>Mosquito Traps</b> (1)</div>
<div class="abs tree" style="left:55px;top:432px;color:#0a7bc2;font-weight:bold;text-decoration:underline;text-underline-offset:3px;letter-spacing:-0.9px">CDPH</div>
<div id="grid" class="abs">
 <div class="gh" style="left:0;width:148px;border-right:1px solid #c8c8c8"><span style="position:absolute;left:5px">Field</span></div>
 <div class="gh" style="left:149px;width:148px;border-right:1px solid #c8c8c8"><span style="position:absolute;left:5px">Value</span></div>
 <div class="gr" style="top:20px"><span style="left:4px">Jurisdiction</span><span style="left:154px;letter-spacing:-0.3px">CDPH</span></div>
 <div class="gr" style="top:39px"><span style="left:4px">Agency</span><span style="left:154px;letter-spacing:-0.3px">CDPH</span></div>
 <div class="gr" style="top:58px"><span style="left:4px">City</span></div>
 <div class="gr" style="top:77px"><span style="left:4px">Zip</span></div>
 <div class="gr" style="top:96px"><span style="left:4px">TrapType</span><span style="left:154px;letter-spacing:-0.1px">GRAVID TRAP</span></div>
 <div style="position:absolute;left:148px;top:19px;width:1px;height:96px;background:#dcdcdc"></div>
 <div style="position:absolute;left:0;top:19px;width:1px;height:96px;background:#dcdcdc"></div>
 <div style="position:absolute;left:297px;top:19px;width:1px;height:96px;background:#dcdcdc"></div>
</div>
<!-- SIDEBAR -->
<style>
#sidebar{left:932px;top:117px;width:201px;height:692px;background:#fff;border-left:1px solid #b8b8b8;box-sizing:border-box;}
#sbhead{left:933px;top:117px;width:200px;height:75px;background:#c8f0fa;}
#sbtitle{left:933px;top:119px;width:200px;text-align:center;font-weight:bold;font-size:21px;line-height:24px;color:#11466a;text-shadow:0 0 2px rgba(17,70,106,0.55);}
.sbbar{left:933px;width:200px;height:24px;background:linear-gradient(to bottom,#f2f2f4 0%,#dcdde1 45%,#b8bbc5 100%);}
.sbbartxt{left:936px;font-weight:bold;font-size:15px;line-height:18px;color:#1d1f5e;letter-spacing:0.9px;white-space:nowrap;}
.sblabel{left:943px;font-weight:bold;font-size:11px;line-height:14px;color:#111;white-space:nowrap;transform-origin:0 0;transform:scaleX(0.975);}
.sbbtn{left:943px;width:161px;height:24px;border:1px solid #222;color:#fff;font-size:12.5px;line-height:24px;white-space:nowrap;}
.sbbtn span{position:absolute;left:3px;top:0;transform-origin:0 50%;text-shadow:0 0 1px rgba(0,0,0,0.5);}
.bl{background:linear-gradient(to bottom,#4093cf 0%,#2583c6 40%,#0e72bb 60%,#0766b0 100%);border-color:#123d63;}
.gy{background:linear-gradient(to bottom,#858585 0%,#787878 40%,#5e5e5e 70%,#4d4d4d 100%);border-color:#2b2b2b;}
.sbit{left:951px;font-style:italic;font-size:11.5px;line-height:13px;color:#222;white-space:nowrap;letter-spacing:0.3px;}
</style>
<div id="sidebar" class="abs"></div>
<div id="sbhead" class="abs"></div>
<div id="sbtitle" class="abs">Cook County<br>West Nile Virus<br>Tracker</div>
<div class="abs sbbar" style="top:192px"></div>
<div class="abs sbbartxt" style="top:195px">Zoom To</div>
<div class="abs" style="left:936px;top:219px;width:170px;height:22px;border:1px solid #7f9db9;background:#fff"></div>
<div class="abs" style="left:941px;top:224px;font-size:13px;line-height:15px;color:#111;white-space:nowrap;letter-spacing:0.3px">[select]</div>
<div class="abs" style="left:1091px;top:221px;width:15px;height:20px;border-radius:2.5px;background:linear-gradient(135deg,#d2dcfd 0%,#bccbfa 50%,#adc5f6 100%)"></div>
<svg class="abs" style="left:1091px;top:221px" width="15" height="20" viewBox="0 0 15 20"><path d="M3.6,7.5 L7.5,11.4 L11.4,7.5" fill="none" stroke="#46587c" stroke-width="2.1"/></svg>
<div class="abs sbbar" style="top:293px;height:23px"></div>
<div class="abs sbbartxt" style="top:295px;letter-spacing:0.15px">Explorer</div>

<div class="abs sblabel" style="top:327px">HUMANS</div>
<div class="abs sbbtn bl" style="top:344px"><span style="transform:scaleX(0.86)">All Cases</span></div>
<div class="abs sbbtn gy" style="top:370px"><span style="transform:scaleX(0.92)">Last 4 Weeks</span></div>
<div class="abs sblabel" style="top:416px">MOSQUITO TRAPS</div>
<div class="abs sbbtn bl" style="top:433px"><span style="transform:scaleX(0.972)">Trap Points</span></div>
<div class="abs sbit" style="top:462px">Positive Traps</div>
<div class="abs sbbtn gy" style="top:477px"><span style="transform:scaleX(1.007)">Current Week</span></div>
<div class="abs sbbtn gy" style="top:503px"><span style="transform:scaleX(0.987)">Two Week History</span></div>
<div class="abs sbit" style="top:532px;letter-spacing:0.15px">% of Positive Pools</div>
<div class="abs sbbtn gy" style="top:547px"><span style="transform:scaleX(0.92)">Last 4 Weeks</span></div>
<div class="abs sblabel" style="top:593px;transform:scaleX(0.88)">BIRDS</div>
<div class="abs sbbtn bl" style="top:610px"><span style="transform:scaleX(0.985)">Birds Tested</span></div>

<!-- page scrollbar -->
<div class="abs" style="left:1133px;top:117px;width:17px;height:692px;background:#fbfbf6;border-left:1px solid #eeede5;box-sizing:border-box"></div>
<div class="abs" style="left:1135px;top:118px;width:14px;height:15px;border-radius:2px;background:#f1efe5;border:1px solid #e6e3d6;box-shadow:0 0 0 1px #fff;box-sizing:border-box"></div>
<svg class="abs" style="left:1135px;top:118px" width="14" height="15" viewBox="0 0 14 15"><path d="M3,9.4 L7,5.4 L11,9.4" fill="none" stroke="#c9c6b9" stroke-width="2.4"/></svg>
<div class="abs" style="left:1135px;top:793px;width:14px;height:14px;border-radius:2px;background:#f1efe5;border:1px solid #e6e3d6;box-shadow:0 0 0 1px #fff;box-sizing:border-box"></div>
<svg class="abs" style="left:1135px;top:792.5px" width="14" height="15" viewBox="0 0 14 15"><path d="M3,5.6 L7,9.6 L11,5.6" fill="none" stroke="#c9c6b9" stroke-width="2.4"/></svg>
<!-- STATUS BAR -->
<div id="statusbar" class="abs"></div>

</div>
</body>
</html>
<!-- status bar contents -->
<div class="abs" style="left:0;top:811px;width:1152px;height:1px;background:#bdb9a6"></div>
<div class="abs" style="left:0;top:812px;width:1152px;height:1px;background:#dedbca"></div>
<div class="abs" style="left:0;top:830px;width:1152px;height:4px;background:linear-gradient(to bottom,#ece9d8,#d6d2c2)"></div>
<svg class="abs" style="left:1px;top:814px" width="18" height="18" viewBox="0 0 18 18">
 <path d="M5.6,16.4 L16.4,16.4 L16.4,5.2" fill="none" stroke="#8d8aa6" stroke-width="1" opacity="0.7"/>
 <path d="M4.5,1.5 L12.5,1.5 L15.5,4.5 L15.5,15.5 L4.5,15.5 Z" fill="#e4ecfd" stroke="#7a80c4" stroke-width="1"/>
 <path d="M5.2,2.2 L12,2.2 L12,5 L14.8,5 L14.8,9 L5.2,7 Z" fill="#fdfdff"/>
 <path d="M12.5,1.5 L12.5,4.5 L15.5,4.5" fill="#cfe0fb" stroke="#7a80c4" stroke-width="0.8"/>
 <circle cx="6.9" cy="9.3" r="4" fill="none" stroke="#1f7be2" stroke-width="2.3"/>
 <path d="M3.2,9.3 L10.8,9.3" stroke="#2a8ae8" stroke-width="1.7"/>
 <path d="M7.8,10.3 L12.2,10.3 L12.2,12.1 L7.8,12.1 Z" fill="#dde8fc"/>
 <path d="M0.9,12 C1.4,6.5 6.5,3.2 12.2,3.4" fill="none" stroke="#62c2f2" stroke-width="1.1"/>
</svg>
<div class="abs tbtxt" style="left:21px;top:818px">Done</div>
<div class="abs" style="left:877px;top:815px;width:1px;height:17px;background:#c5c2b2;box-shadow:1px 0 0 #fff,24px 0 0 #c5c2b2,25px 0 0 #fff,47px 0 0 #c5c2b2,48px 0 0 #fff,71px 0 0 #c5c2b2,72px 0 0 #fff,95px 0 0 #c5c2b2,96px 0 0 #fff,119px 0 0 #c5c2b2,120px 0 0 #fff,272px 0 0 #c5c2b2,273px 0 0 #fff"></div>
<svg class="abs" style="left:1000px;top:814px" width="20" height="18" viewBox="0 0 20 18">
 <defs><linearGradient id="mon" x1="0" y1="0" x2="1" y2="1"><stop offset="0" stop-color="#a6e0fc"/><stop offset="1" stop-color="#3f8fe6"/></linearGradient></defs>
 <circle cx="5.6" cy="5.6" r="4.4" fill="#2a6fd0" stroke="#1d4e9a" stroke-width="0.6"/>
 <path d="M2.6,3.4 C3.8,1.6 6,1.3 7.4,2.4 C7,4 5.6,4.6 5,6 C4.4,7.4 3,7.4 1.8,6.2 Z M4.6,8.2 C5.6,7.6 7,8 7.4,9.2 C6.4,9.9 5.2,9.7 4.6,8.2 Z" fill="#3fa53a"/>
 <ellipse cx="12.6" cy="14.3" rx="6" ry="2.3" fill="#c3bce4" stroke="#8a84b8" stroke-width="0.7"/>
 <path d="M10.8,10.6 L15,10.6 L15.6,13 L10.2,13 Z" fill="#aaa4d4"/>
 <path d="M7.7,1.6 L17.8,1.2 L17.2,10.6 L8.5,11 Z" fill="url(#mon)" stroke="#5577b8" stroke-width="0.9" stroke-linejoin="round"/>
</svg>
<div class="abs tbtxt" style="left:1021px;top:818px;letter-spacing:-0.12px">Local intranet</div>
<!-- taskbar strip -->
<div class="abs" style="left:0;top:834px;width:1152px;height:4px;background:linear-gradient(to bottom,#2c6ce0 0,#3e86ee 1.5px,#4a94f2 4px)"></div>
<div class="abs" style="left:0;top:834px;width:93px;height:4px;background:linear-gradient(to bottom,#2e8c30 0,#4aa24e 1.5px,#68b66a 4px);border-right:1px solid #2a6a3a;box-sizing:border-box"></div>
<div class="abs" style="left:1042px;top:834px;width:110px;height:4px;background:linear-gradient(to bottom,#1670dc 0,#1a8ee8 1.5px,#1b9fee 4px)"></div>
